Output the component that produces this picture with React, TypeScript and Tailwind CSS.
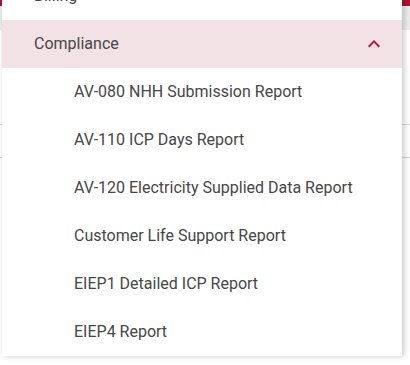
import React from 'react'

const reports = [
  'AV-080 NHH Submission Report',
  'AV-110 ICP Days Report',
  'AV-120 Electricity Supplied Data Report',
  'Customer Life Support Report',
  'EIEP1 Detailed ICP Report',
  'EIEP4 Report',
]

function ExpandLess() {
  return (
    <svg width="24" height="24" viewBox="0 0 24 24" className="text-[#b8173b]">
      <path fill="currentColor" d="M12 8l-6 6 1.41 1.41L12 10.83l4.59 4.58L18 14z" />
    </svg>
  )
}

export default function App() {
  return (
    <div
      className="relative h-[365px] w-[410px] overflow-hidden bg-white text-[#464646]"
      style={{ fontFamily: 'Roboto, "Noto Sans", sans-serif' }}
    >
      {/* page behind the menu */}
      <div className="h-[6px] bg-[#a8172f]" />
      <div className="h-[24px] bg-[#ececec]" />
      <div className="h-[95px] border-b border-[#d6d6d6]" />
      <div className="h-[33px] border-b border-[#d6d6d6]" />

      {/* menu */}
      <div className="absolute left-[2px] top-[-28px] w-[400px] bg-white shadow-[2px_0_6px_rgba(0,0,0,0.22)]">
        <div className="flex h-12 items-center pl-8 text-base">Billing</div>
        <div className="flex h-12 items-center justify-between bg-[#f3e2e5] pl-8 pr-4 text-base">
          <span>Compliance</span>
          <ExpandLess />
        </div>
        {reports.map((r) => (
          <div key={r} className="flex h-12 items-center pl-[72px] text-base">
            {r}
          </div>
        ))}
      </div>
    </div>
  )
}
